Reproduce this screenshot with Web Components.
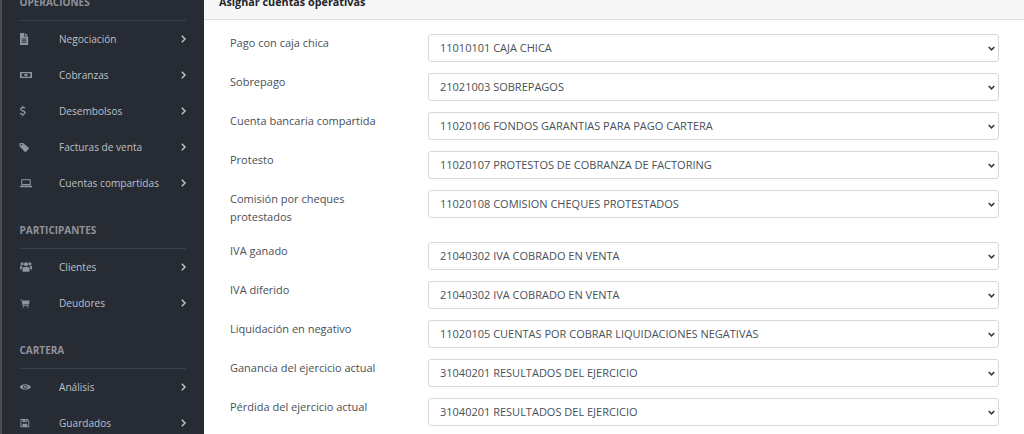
<!DOCTYPE html>
<html lang="es">
<head>
<meta charset="utf-8">
<title>Asignar cuentas operativas</title>
<style>
  html, body { margin: 0; height: 100%; overflow: hidden; background: #fff; }
</style>
</head>
<body>
<app-shell>
  <side-nav slot="nav">
    <nav-section title="OPERACIONES" style="margin-top:-6px">
      <nav-item icon="file">Negociación</nav-item>
      <nav-item icon="money">Cobranzas</nav-item>
      <nav-item icon="dollar">Desembolsos</nav-item>
      <nav-item icon="tag">Facturas de venta</nav-item>
      <nav-item icon="laptop">Cuentas compartidas</nav-item>
    </nav-section>
    <nav-section title="PARTICIPANTES">
      <nav-item icon="users">Clientes</nav-item>
      <nav-item icon="cart">Deudores</nav-item>
    </nav-section>
    <nav-section title="CARTERA">
      <nav-item icon="eye">Análisis</nav-item>
      <nav-item icon="save">Guardados</nav-item>
    </nav-section>
  </side-nav>
  <account-card heading="Asignar cuentas operativas">
    <account-row label="Pago con caja chica" value="11010101 CAJA CHICA"></account-row>
    <account-row label="Sobrepago" value="21021003 SOBREPAGOS"></account-row>
    <account-row label="Cuenta bancaria compartida" value="11020106 FONDOS GARANTIAS PARA PAGO CARTERA"></account-row>
    <account-row label="Protesto" value="11020107 PROTESTOS DE COBRANZA DE FACTORING"></account-row>
    <account-row label="Comisión por cheques protestados" value="11020108 COMISION CHEQUES PROTESTADOS"></account-row>
    <account-row label="IVA ganado" value="21040302 IVA COBRADO EN VENTA"></account-row>
    <account-row label="IVA diferido" value="21040302 IVA COBRADO EN VENTA"></account-row>
    <account-row label="Liquidación en negativo" value="11020105 CUENTAS POR COBRAR LIQUIDACIONES NEGATIVAS"></account-row>
    <account-row label="Ganancia del ejercicio actual" value="31040201 RESULTADOS DEL EJERCICIO"></account-row>
    <account-row label="Pérdida del ejercicio actual" value="31040201 RESULTADOS DEL EJERCICIO"></account-row>
  </account-card>
</app-shell>

<script>
const ICONS = {
  file: '<path fill-rule="evenodd" d="M0 0h5v4h4.500v10H0zM6 0l3.500 3.200H6zM2 6.500v1h5.500v-1zM2 8.500v1h5.500v-1zM2 10.500v1h5.500v-1z"/>',
  money: '<g transform="translate(0 1.400) scale(1 .8)"><path fill-rule="evenodd" d="M0 2.500h14v9H0zM2 4.500v5h10v-5z"/><circle cx="7" cy="7" r="2"/></g>',
  dollar: '<path d="M2.500 1h1.400v1.300c1 .1 1.900.5 2.500 1L5.600 4.500c-.7-.5-1.500-.8-2.300-.8-.9 0-1.400.4-1.400 1 0 .7.6.9 1.700 1.300 1.600.5 3 1.100 3 2.800 0 1.400-1 2.400-2.700 2.600V13H2.500v-1.500c-1.100-.1-2.100-.6-2.800-1.200l.9-1.200c.8.6 1.700 1 2.600 1 1 0 1.600-.4 1.600-1.100 0-.7-.6-1-1.800-1.400C1.500 7 .2 6.400.2 4.800c0-1.300 1-2.300 2.300-2.500z"/>',
  tag: '<g transform="translate(-.5 1.400) scale(.85)"><path fill-rule="evenodd" d="M0 1h5l7.500 6.500c.6.600.6 1.200 0 1.800l-3.700 3.700c-.6.600-1.200.6-1.800 0L0 5.500zM2.700 2.200a1 1 0 1 0 .01 0z"/></g>',
  laptop: '<path fill-rule="evenodd" d="M1.500 2.500h11v7h-11zM2.700 3.700v4.600h8.600V3.700zM0 10.300h14V12H0z"/>',
  users: '<circle cx="7" cy="3.800" r="2.400"/><circle cx="2.500" cy="3.200" r="1.800"/><circle cx="11.500" cy="3.200" r="1.800"/><path d="M3.800 7h6.400l.9 1v4.500H2.900V8zM0 5.500h2.700L2 7.500V10H0zM11.300 5.500H14V10h-2V7.500z"/>',
  cart: '<g transform="translate(.5 2) scale(.78)"><path d="M0 1h2.300l.4 1.500H14l-1.200 6H4.200l.2 1h8v1H3.200L1.600 2H0z"/><circle cx="4.700" cy="12.300" r="1.200"/><circle cx="11" cy="12.300" r="1.200"/></g>',
  eye: '<g transform="translate(-.5 1.750) scale(.95 .75)"><path fill-rule="evenodd" d="M0 7c1.600-2.800 4-4.200 7-4.200S12.400 4.200 14 7c-1.600 2.800-4 4.200-7 4.200S1.600 9.800 0 7zM7 4.200a2.800 2.800 0 1 0 .01 0z"/><circle cx="7" cy="7" r="1.600"/></g>',
  save: '<g transform="translate(.5 1.500) scale(.8)"><path fill-rule="evenodd" d="M0 1h10.500L13 3.500V13H0zM1.400 2.400v9.200h10.200V4.200L10 2.400v3H3v-3zM7 2.400v2h1.500v-2zM3 8h7v3.600H3z"/></g>'
};

const CHEVRON = "url(\"data:image/svg+xml,%3Csvg xmlns='http://www.w3.org/2000/svg' viewBox='0 0 8 5'%3E%3Cpath d='M.8.8 4 4 7.200.8' fill='none' stroke='%23343a40' stroke-width='1.800'/%3E%3C/svg%3E\")";

class AppShell extends HTMLElement {
  constructor() {
    super();
    this.attachShadow({ mode: 'open' });
    this.shadowRoot.innerHTML = `
      <style>
        :host { display: flex; height: 434px; overflow: hidden; background: #fff; }
        main { flex: 1; min-width: 0; }
      </style>
      <slot name="nav"></slot>
      <main><slot></slot></main>
    `;
  }
}

class SideNav extends HTMLElement {
  constructor() {
    super();
    this.attachShadow({ mode: 'open' });
    this.shadowRoot.innerHTML = `
      <style>
        :host {
          display: flex; flex-direction: column; flex: 0 0 204px; box-sizing: border-box;
          background: #272b33; border-left: 2px solid #4c4f55;
          padding: 0 18.500px 0 17.500px; overflow: hidden; color: #c1c4ca;
          font: 400 10.100px/16px "Open Sans", sans-serif;
        }
      </style>
      <slot></slot>
    `;
  }
}

class NavSection extends HTMLElement {
  constructor() {
    super();
    this.attachShadow({ mode: 'open' });
    this.shadowRoot.innerHTML = `
      <style>
        :host { display: block; margin-bottom: 21px; }
        h2 {
          margin: 0; padding-bottom: 10px; border-bottom: 1px solid #3c4048;
          font: 700 10px/16px "Open Sans", sans-serif; color: #8e939c;
        }
        ul { list-style: none; margin: 0; padding: 0; }
      </style>
      <h2></h2>
      <ul><slot></slot></ul>
    `;
    this.shadowRoot.querySelector('h2').textContent = this.getAttribute('title');
  }
}

class NavItem extends HTMLElement {
  constructor() {
    super();
    this.attachShadow({ mode: 'open' });
    this.shadowRoot.innerHTML = `
      <style>
        :host { display: flex; align-items: center; height: 36px; }
        svg.icon { flex: 0 0 auto; width: 12px; height: 12px; margin-right: 27.500px; fill: #8f95a0; overflow: visible; }
        .label { flex: 1; white-space: nowrap; color: #bcc0c7; }
        svg.arrow { flex: 0 0 auto; width: 5px; height: 8px; fill: none; stroke: #bcc0c7; stroke-width: 1.500; }
      </style>
      <svg class="icon" viewBox="0 0 14 14">${ICONS[this.getAttribute('icon')] || ''}</svg>
      <span class="label"><slot></slot></span>
      <svg class="arrow" viewBox="0 0 5 8"><path d="M.8.8 4 4 .8 7.200"/></svg>
    `;
  }
}

class AccountCard extends HTMLElement {
  constructor() {
    super();
    this.attachShadow({ mode: 'open' });
    this.shadowRoot.innerHTML = `
      <style>
        :host { display: block; font: 400 11px/18px "Open Sans", sans-serif; color: #495057; }
        header {
          height: 20px; padding: 0 15px; box-sizing: border-box;
          background: #f7f7f7; border-bottom: 1px solid #dfdfdf;
          display: flex; align-items: flex-end;
        }
        h1 { margin: 0 0 8px; font: 700 10.800px/18px "Open Sans", sans-serif; color: #212529; white-space: nowrap; }
        .body { padding: 14px 25.500px 0 26px; }
      </style>
      <header><h1></h1></header>
      <div class="body"><slot></slot></div>
    `;
    this.shadowRoot.querySelector('h1').textContent = this.getAttribute('heading');
  }
}

class AccountRow extends HTMLElement {
  constructor() {
    super();
    this.attachShadow({ mode: 'open' });
    this.shadowRoot.innerHTML = `
      <style>
        :host { display: flex; align-items: flex-start; margin-bottom: 11px; }
        label { flex: 0 0 197.500px; box-sizing: border-box; padding: 0 30px 5px 0; }
        select {
          flex: 1; min-width: 0; height: 28px; box-sizing: border-box; padding: 0 24px 2px 11.500px;
          appearance: none; -webkit-appearance: none;
          font: 400 11px "Open Sans", sans-serif; color: #495057;
          background: #fff no-repeat right 3px center / 7px 5px;
          border: 1px solid #d3d8de; border-radius: 3px; outline: 0;
        }
      </style>
      <label></label>
      <select></select>
    `;
    this.shadowRoot.querySelector('label').textContent = this.getAttribute('label');
    const select = this.shadowRoot.querySelector('select');
    select.style.backgroundImage = CHEVRON;
    const opt = document.createElement('option');
    opt.textContent = this.getAttribute('value');
    select.append(opt);
  }
}

customElements.define('app-shell', AppShell);
customElements.define('side-nav', SideNav);
customElements.define('nav-section', NavSection);
customElements.define('nav-item', NavItem);
customElements.define('account-card', AccountCard);
customElements.define('account-row', AccountRow);
</script>
</body>
</html>
